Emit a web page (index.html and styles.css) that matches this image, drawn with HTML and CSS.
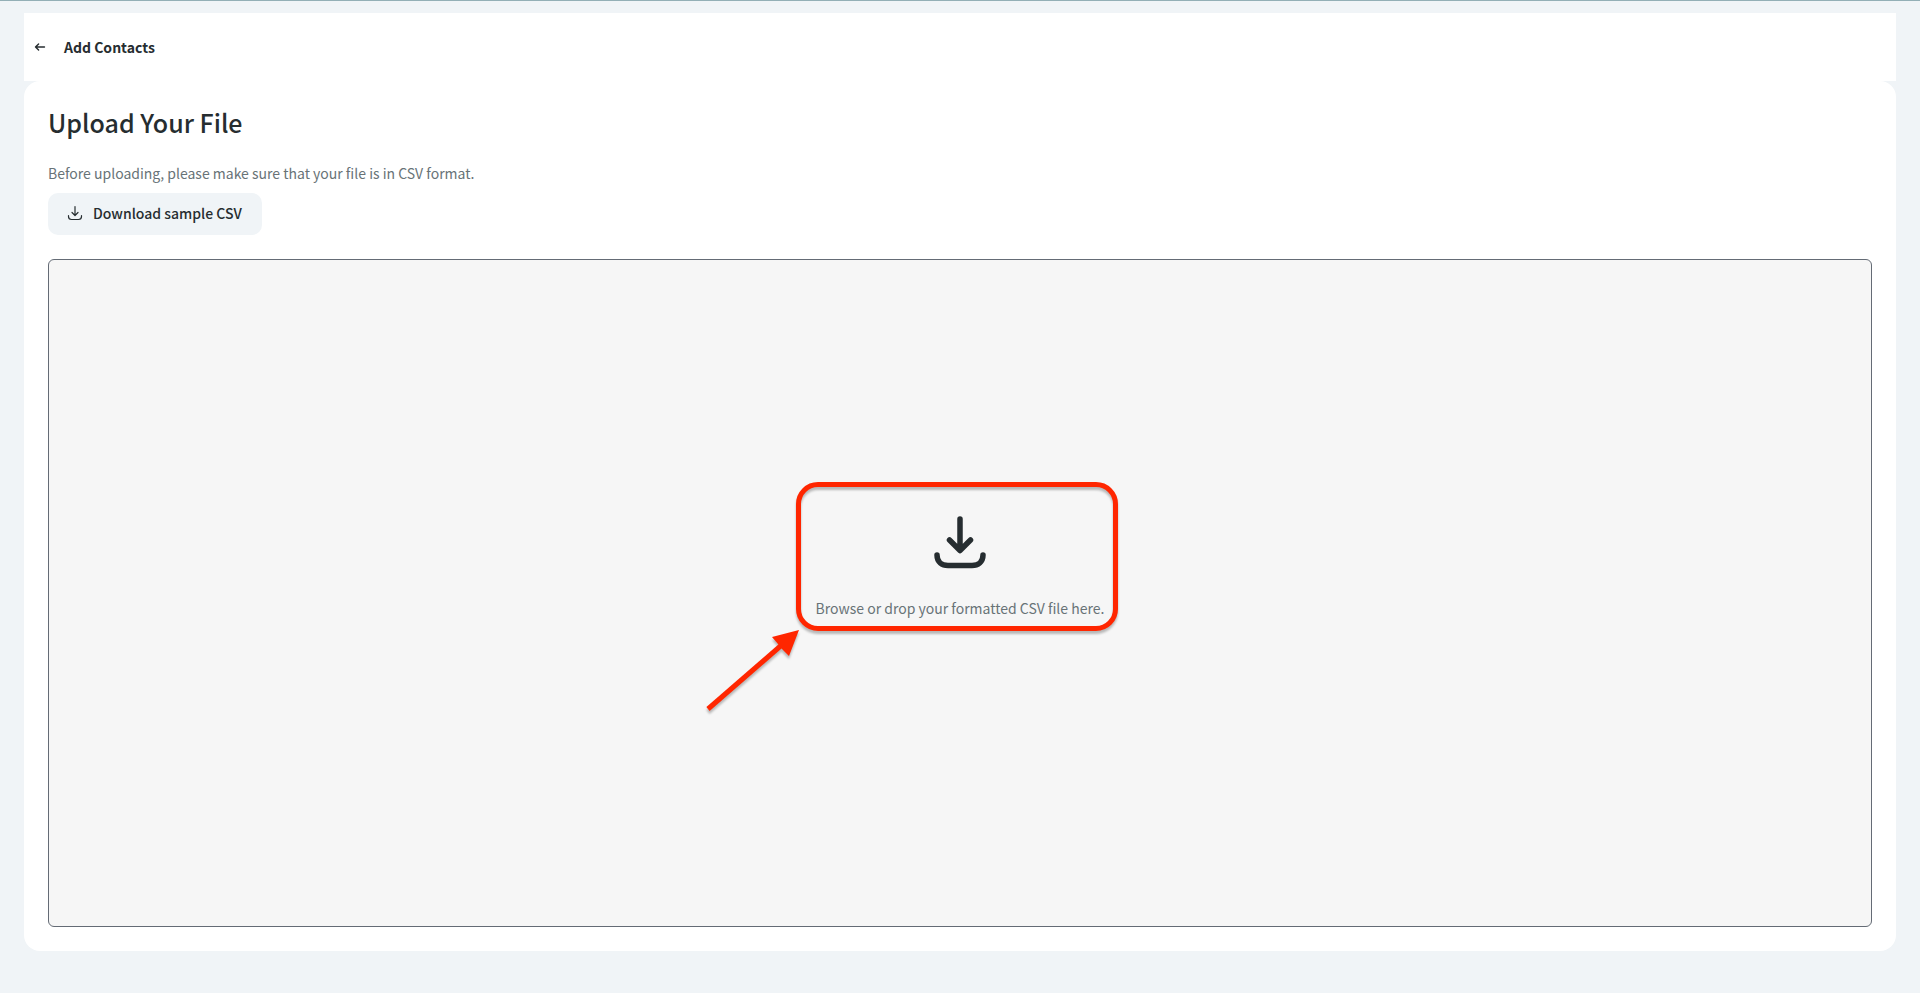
FILE: index.html
```html
<!DOCTYPE html>
<html lang="en">
<head>
<meta charset="utf-8">
<meta name="viewport" content="width=device-width, initial-scale=1">
<title>Add Contacts</title>
<link rel="stylesheet" href="styles.css">
</head>
<body>
<header class="topbar">
  <button class="back" type="button" aria-label="Back">
    <svg class="back-icon" viewBox="0 0 12 12" aria-hidden="true"><path d="M10.500 6H1.5M4.6 2.900L1.5 6L4.6 9.100"/></svg>
  </button>
  <span class="topbar-title">Add Contacts</span>
</header>
<main class="panel">
  <h1 class="title">Upload Your File</h1>
  <p class="hint">Before uploading, please make sure that your file is in CSV format.</p>
  <button class="download" type="button">
    <svg class="download-icon" viewBox="0 0 16 16" aria-hidden="true"><path d="M8 1.5V10M5 7.5L8 10.5L11 7.5M1.5 10.5V11.5Q1.5 14.5 4.5 14.5H11.5Q14.5 14.5 14.5 11.5V10.5"/></svg>
    <span>Download sample CSV</span>
  </button>
  <label class="dropzone" for="csv-file">
    <input class="file-input" id="csv-file" type="file" accept=".csv">
    <span class="drop-content">
      <svg class="drop-icon" viewBox="0 0 64 64" aria-hidden="true"><path d="M32 9V40M21.5 30L32 40.5L42.5 30M9 45C9 52 14 55.500 20 55.500H44C50 55.500 55 52 55 45"/></svg>
      <span class="drop-text">Browse or drop your formatted CSV file here.</span>
      <span class="highlight" aria-hidden="true"></span>
      <svg class="pointer" viewBox="0 0 100 90" aria-hidden="true"><path class="pointer-line" d="M4 84L80 18"/><path class="pointer-head" d="M95 5L85 31L78 24L74 19L68 12Z"/></svg>
    </span>
  </label>
</main>
</body>
</html>
```

FILE: styles.css
```css
* {
  box-sizing: border-box;
}

body {
  display: flex;
  flex-direction: column;
  min-height: 100vh;
  margin: 0;
  padding: 12px 24px 42px;
  border-top: 1px solid #93afb6;
  background: #f0f4f7;
  color: #262d30;
  font-family: "Noto Sans CJK SC", "Open Sans", sans-serif;
  font-size: 14px;
  line-height: 20px;
}

.topbar {
  display: flex;
  align-items: center;
  gap: 16px;
  height: 68px;
  padding: 0 8px;
  background: #fff;
}

.back {
  display: flex;
  padding: 2px;
  border: 0;
  background: none;
  color: inherit;
  cursor: pointer;
}

.back-icon {
  width: 12px;
  height: 12px;
}

.back-icon,
.download-icon,
.drop-icon {
  fill: none;
  stroke: currentColor;
  stroke-linecap: round;
  stroke-linejoin: round;
}

.back-icon {
  stroke-width: 1.4;
}

.topbar-title {
  font-weight: 700;
}

.panel {
  display: flex;
  flex: 1;
  flex-direction: column;
  align-items: flex-start;
  padding: 24px;
  border-radius: 16px;
  background: #fff;
}

.title {
  margin: 0 0 22px;
  font-size: 25px;
  font-weight: 500;
  line-height: 34px;
}

.hint {
  margin: 0 0 8px;
  color: #687377;
  line-height: 24px;
}

.download {
  display: flex;
  align-items: center;
  gap: 10px;
  height: 42px;
  margin-bottom: 24px;
  padding: 0 20px 2px 19px;
  border: 0;
  border-radius: 10px;
  background: #f0f4f7;
  color: inherit;
  font: inherit;
  font-weight: 500;
  cursor: pointer;
}

.download-icon {
  width: 16px;
  height: 16px;
  stroke-width: 1.2;
}

.dropzone {
  position: relative;
  display: flex;
  flex: 1;
  align-items: center;
  justify-content: center;
  align-self: stretch;
  padding-bottom: 58px;
  border: 1px solid #646b75;
  border-radius: 6px;
  background: #f6f6f6;
  cursor: pointer;
}

.file-input {
  position: absolute;
  width: 1px;
  height: 1px;
  opacity: 0;
}

.drop-content {
  position: relative;
  display: flex;
  flex-direction: column;
  align-items: center;
  gap: 24px;
  padding: 0 4px;
}

.drop-icon {
  width: 64px;
  height: 64px;
  stroke-width: 5.5;
}

.drop-text {
  color: #687377;
}

.highlight {
  position: absolute;
  inset: -28px -10px -13px -16px;
  border: 5px solid #ff2600;
  border-radius: 22px;
  filter: drop-shadow(0 3px 1px rgb(0 0 0 / 25%));
}

.pointer {
  position: absolute;
  top: 115px;
  right: 100%;
  width: 100px;
  height: 90px;
  margin-right: 8px;
  filter: drop-shadow(0 3px 1px rgb(0 0 0 / 25%));
}

.pointer-line {
  fill: none;
  stroke: #ff2600;
  stroke-width: 5;
}

.pointer-head {
  fill: #ff2600;
}
```
